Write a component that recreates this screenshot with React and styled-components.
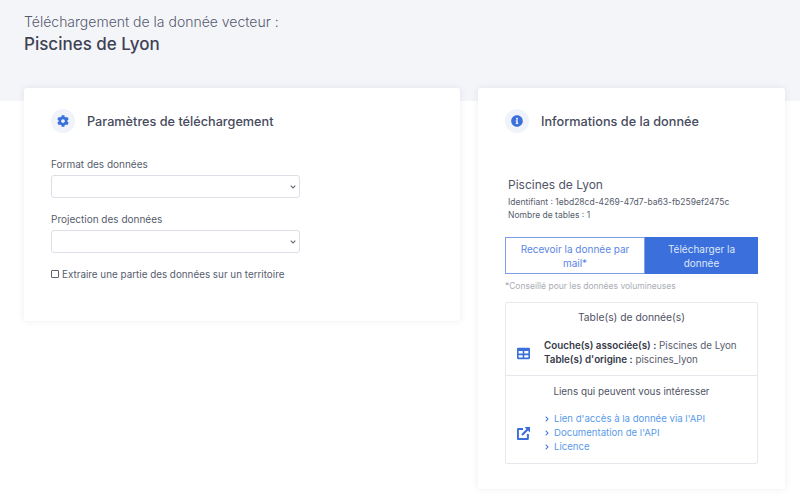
import React from 'react';
import styled, { createGlobalStyle } from 'styled-components';
import { FaCog, FaInfoCircle, FaChevronRight, FaTable } from 'react-icons/fa';

const GlobalStyle = createGlobalStyle`
  html, body {
    margin: 0;
    padding: 0;
    background: #fff;
    font-family: Inter, "Open Sans", "Liberation Sans", sans-serif;
    color: #495057;
  }
  * {
    box-sizing: border-box;
  }
`;

const Page = styled.div`
  width: 800px;
  height: 504px;
  overflow: hidden;
`;

const Banner = styled.header`
  height: 101px;
  background: #f4f5f9;
  padding: 13px 24px 0;
`;

const Overline = styled.div`
  font-size: 14px;
  line-height: 18px;
  font-weight: 300;
  color: #555a6e;
`;

const PageTitle = styled.h1`
  margin: 1px 0 0;
  font-size: 17px;
  line-height: 24px;
  font-weight: 500;
  color: #3f4254;
`;

const Columns = styled.main`
  display: flex;
  align-items: flex-start;
  gap: 18px;
  padding: 0 15px 0 24px;
  margin-top: -13px;
`;

const Card = styled.section`
  width: ${(p) => p.$width}px;
  height: ${(p) => p.$height}px;
  background: #fff;
  border-radius: 3px;
  box-shadow: 0 0 6px rgba(60, 70, 120, 0.1);
  padding: 21px 27px 0;
`;

const CardHead = styled.div`
  display: flex;
  align-items: center;
  gap: 12px;
  height: 24px;
`;

const IconBubble = styled.span`
  width: 24px;
  height: 24px;
  border-radius: 50%;
  background: #f1f3fb;
  color: #3a6fdc;
  display: flex;
  align-items: center;
  justify-content: center;
  font-size: 12px;
`;

const CardTitle = styled.h2`
  margin: 0;
  font-size: 12.7px;
  font-weight: 500;
  color: #464a5c;
`;

const Form = styled.form`
  margin-top: 24px;
  width: 249px;
`;

const FieldLabel = styled.label`
  display: block;
  font-size: 10px;
  line-height: 14px;
  margin-bottom: 4px;
  color: #565c6c;
`;

const Field = styled.div`
  margin-bottom: 14px;
`;

const Select = styled.select`
  display: block;
  width: 100%;
  height: 23px;
  appearance: none;
  background: #fff url("data:image/svg+xml,%3Csvg xmlns='http://www.w3.org/2000/svg' width='6' height='4'%3E%3Cpath d='M.7.7 3 3l2.3-2.3' fill='none' stroke='%23666b78' stroke-width='1.1'/%3E%3C/svg%3E") no-repeat right 3px center;
  border: 1px solid #dcdfe5;
  border-radius: 3px;
  font-size: 10px;
  color: #495057;
`;

const CheckRow = styled.label`
  display: flex;
  align-items: center;
  gap: 3px;
  margin-top: 14px;
  font-size: 9.85px;
  line-height: 14px;
  white-space: nowrap;
  color: #565c6c;
`;

const Check = styled.input`
  appearance: none;
  width: 8px;
  height: 8px;
  margin: 0;
  border: 1px solid #5d6270;
  border-radius: 1px;
  background: #fff;
`;

const DataBlock = styled.div`
  margin: 43px 0 0 3px;
`;

const DataName = styled.h3`
  margin: 0 0 2px;
  font-size: 12px;
  line-height: 18px;
  font-weight: 400;
  color: #505565;
`;

const Meta = styled.div`
  font-size: 8.5px;
  line-height: 12.5px;
  color: #565c6c;
`;

const ButtonGroup = styled.div`
  display: flex;
  width: 253px;
  height: 37px;
  margin-top: 16px;
`;

const ActionButton = styled.button`
  flex: 0 0 ${(p) => p.$width}px;
  padding: 0 12px;
  font: inherit;
  font-size: 10px;
  line-height: 14px;
  border: 1px solid ${(p) => (p.$solid ? '#3a6fdc' : '#7d9fe8')};
  border-radius: 0;
  color: ${(p) => (p.$solid ? '#dfe7fa' : '#5b85e4')};
  background: ${(p) => (p.$solid ? '#3a6fdc' : '#fff')};
`;

const Footnote = styled.p`
  margin: 6px 0 9px;
  font-size: 8.5px;
  line-height: 13px;
  color: #a9adb5;
`;

const InfoBox = styled.div`
  width: 253px;
  height: 162px;
  border: 1px solid #e6e8ee;
  border-radius: 2px;
`;

const InfoSection = styled.div`
  height: ${(p) => p.$height}px;
  padding-top: ${(p) => p.$pad}px;
  border-bottom: ${(p) => (p.$divided ? '1px solid #e6e8ee' : 'none')};
`;

const SectionTitle = styled.div`
  text-align: center;
  font-size: ${(p) => p.$size}px;
  line-height: 14px;
  color: #4f5363;
`;

const InfoRow = styled.div`
  display: flex;
  align-items: center;
  margin-top: ${(p) => p.$top}px;
  padding-left: 11px;
  gap: 14px;
  color: #3a6fdc;
`;

const RowIcon = styled.svg`
  flex: 0 0 13px;
  width: 13px;
  height: 13px;
`;

const Lines = styled.div`
  font-size: 9.8px;
  line-height: 14px;
  color: #565c6c;
  white-space: nowrap;
`;

const Strong = styled.strong`
  font-weight: 600;
  color: #363a48;
`;

const LinkList = styled.ul`
  list-style: none;
  margin: 0;
  padding: 0;
`;

const LinkItem = styled.li`
  display: flex;
  align-items: center;
  gap: 4px;
  font-size: 9.6px;
  line-height: 14px;
  white-space: nowrap;
  color: #3a6fdc;
`;

const LinkText = styled.a`
  color: #5a9be8;
  text-decoration: none;
`;

const links = ["Lien d'accès à la donnée via l'API", "Documentation de l'API", 'Licence'];

export default function App() {
  return (
    <Page>
      <GlobalStyle />
      <Banner>
        <Overline>Téléchargement de la donnée vecteur :</Overline>
        <PageTitle>Piscines de Lyon</PageTitle>
      </Banner>
      <Columns>
        <Card $width={436} $height={233}>
          <CardHead>
            <IconBubble><FaCog /></IconBubble>
            <CardTitle>Paramètres de téléchargement</CardTitle>
          </CardHead>
          <Form>
            <Field>
              <FieldLabel>Format des données</FieldLabel>
              <Select />
            </Field>
            <Field>
              <FieldLabel>Projection des données</FieldLabel>
              <Select />
            </Field>
            <CheckRow>
              <Check type="checkbox" />
              Extraire une partie des données sur un territoire
            </CheckRow>
          </Form>
        </Card>
        <Card $width={307} $height={401}>
          <CardHead>
            <IconBubble><FaInfoCircle /></IconBubble>
            <CardTitle>Informations de la donnée</CardTitle>
          </CardHead>
          <DataBlock>
            <DataName>Piscines de Lyon</DataName>
            <Meta>Identifiant : 1ebd28cd-4269-47d7-ba63-fb259ef2475c</Meta>
            <Meta>Nombre de tables : 1</Meta>
          </DataBlock>
          <ButtonGroup>
            <ActionButton type="button" $width={140}>Recevoir la donnée par mail*</ActionButton>
            <ActionButton type="button" $width={113} $solid>Télécharger la donnée</ActionButton>
          </ButtonGroup>
          <Footnote>*Conseillé pour les données volumineuses</Footnote>
          <InfoBox>
            <InfoSection $height={73} $pad={7} $divided>
              <SectionTitle $size={10.3}>Table(s) de donnée(s)</SectionTitle>
              <InfoRow $top={15}>
                <RowIcon as={FaTable} />
                <Lines>
                  <div><Strong>Couche(s) associée(s) :</Strong> Piscines de Lyon</div>
                  <div><Strong>Table(s) d'origine :</Strong> piscines_lyon</div>
                </Lines>
              </InfoRow>
            </InfoSection>
            <InfoSection $height={87} $pad={8}>
              <SectionTitle $size={9.85}>Liens qui peuvent vous intéresser</SectionTitle>
              <InfoRow $top={14}>
                <RowIcon viewBox="0 0 13 13" fill="none" stroke="currentColor" strokeWidth="2">
                  <path d="M6 2.1H1.4a.5.5 0 0 0-.5.5v9a.5.5 0 0 0 .5.5h9a.5.5 0 0 0 .5-.5V7" />
                  <path d="M5 8 11 2" strokeWidth="2.2" />
                  <path d="M7.5 0H13v5.5z" fill="currentColor" stroke="none" />
                </RowIcon>
                <LinkList>
                  {links.map((link) => (
                    <LinkItem key={link}>
                      <FaChevronRight size={6} />
                      <LinkText>{link}</LinkText>
                    </LinkItem>
                  ))}
                </LinkList>
              </InfoRow>
            </InfoSection>
          </InfoBox>
        </Card>
      </Columns>
    </Page>
  );
}
